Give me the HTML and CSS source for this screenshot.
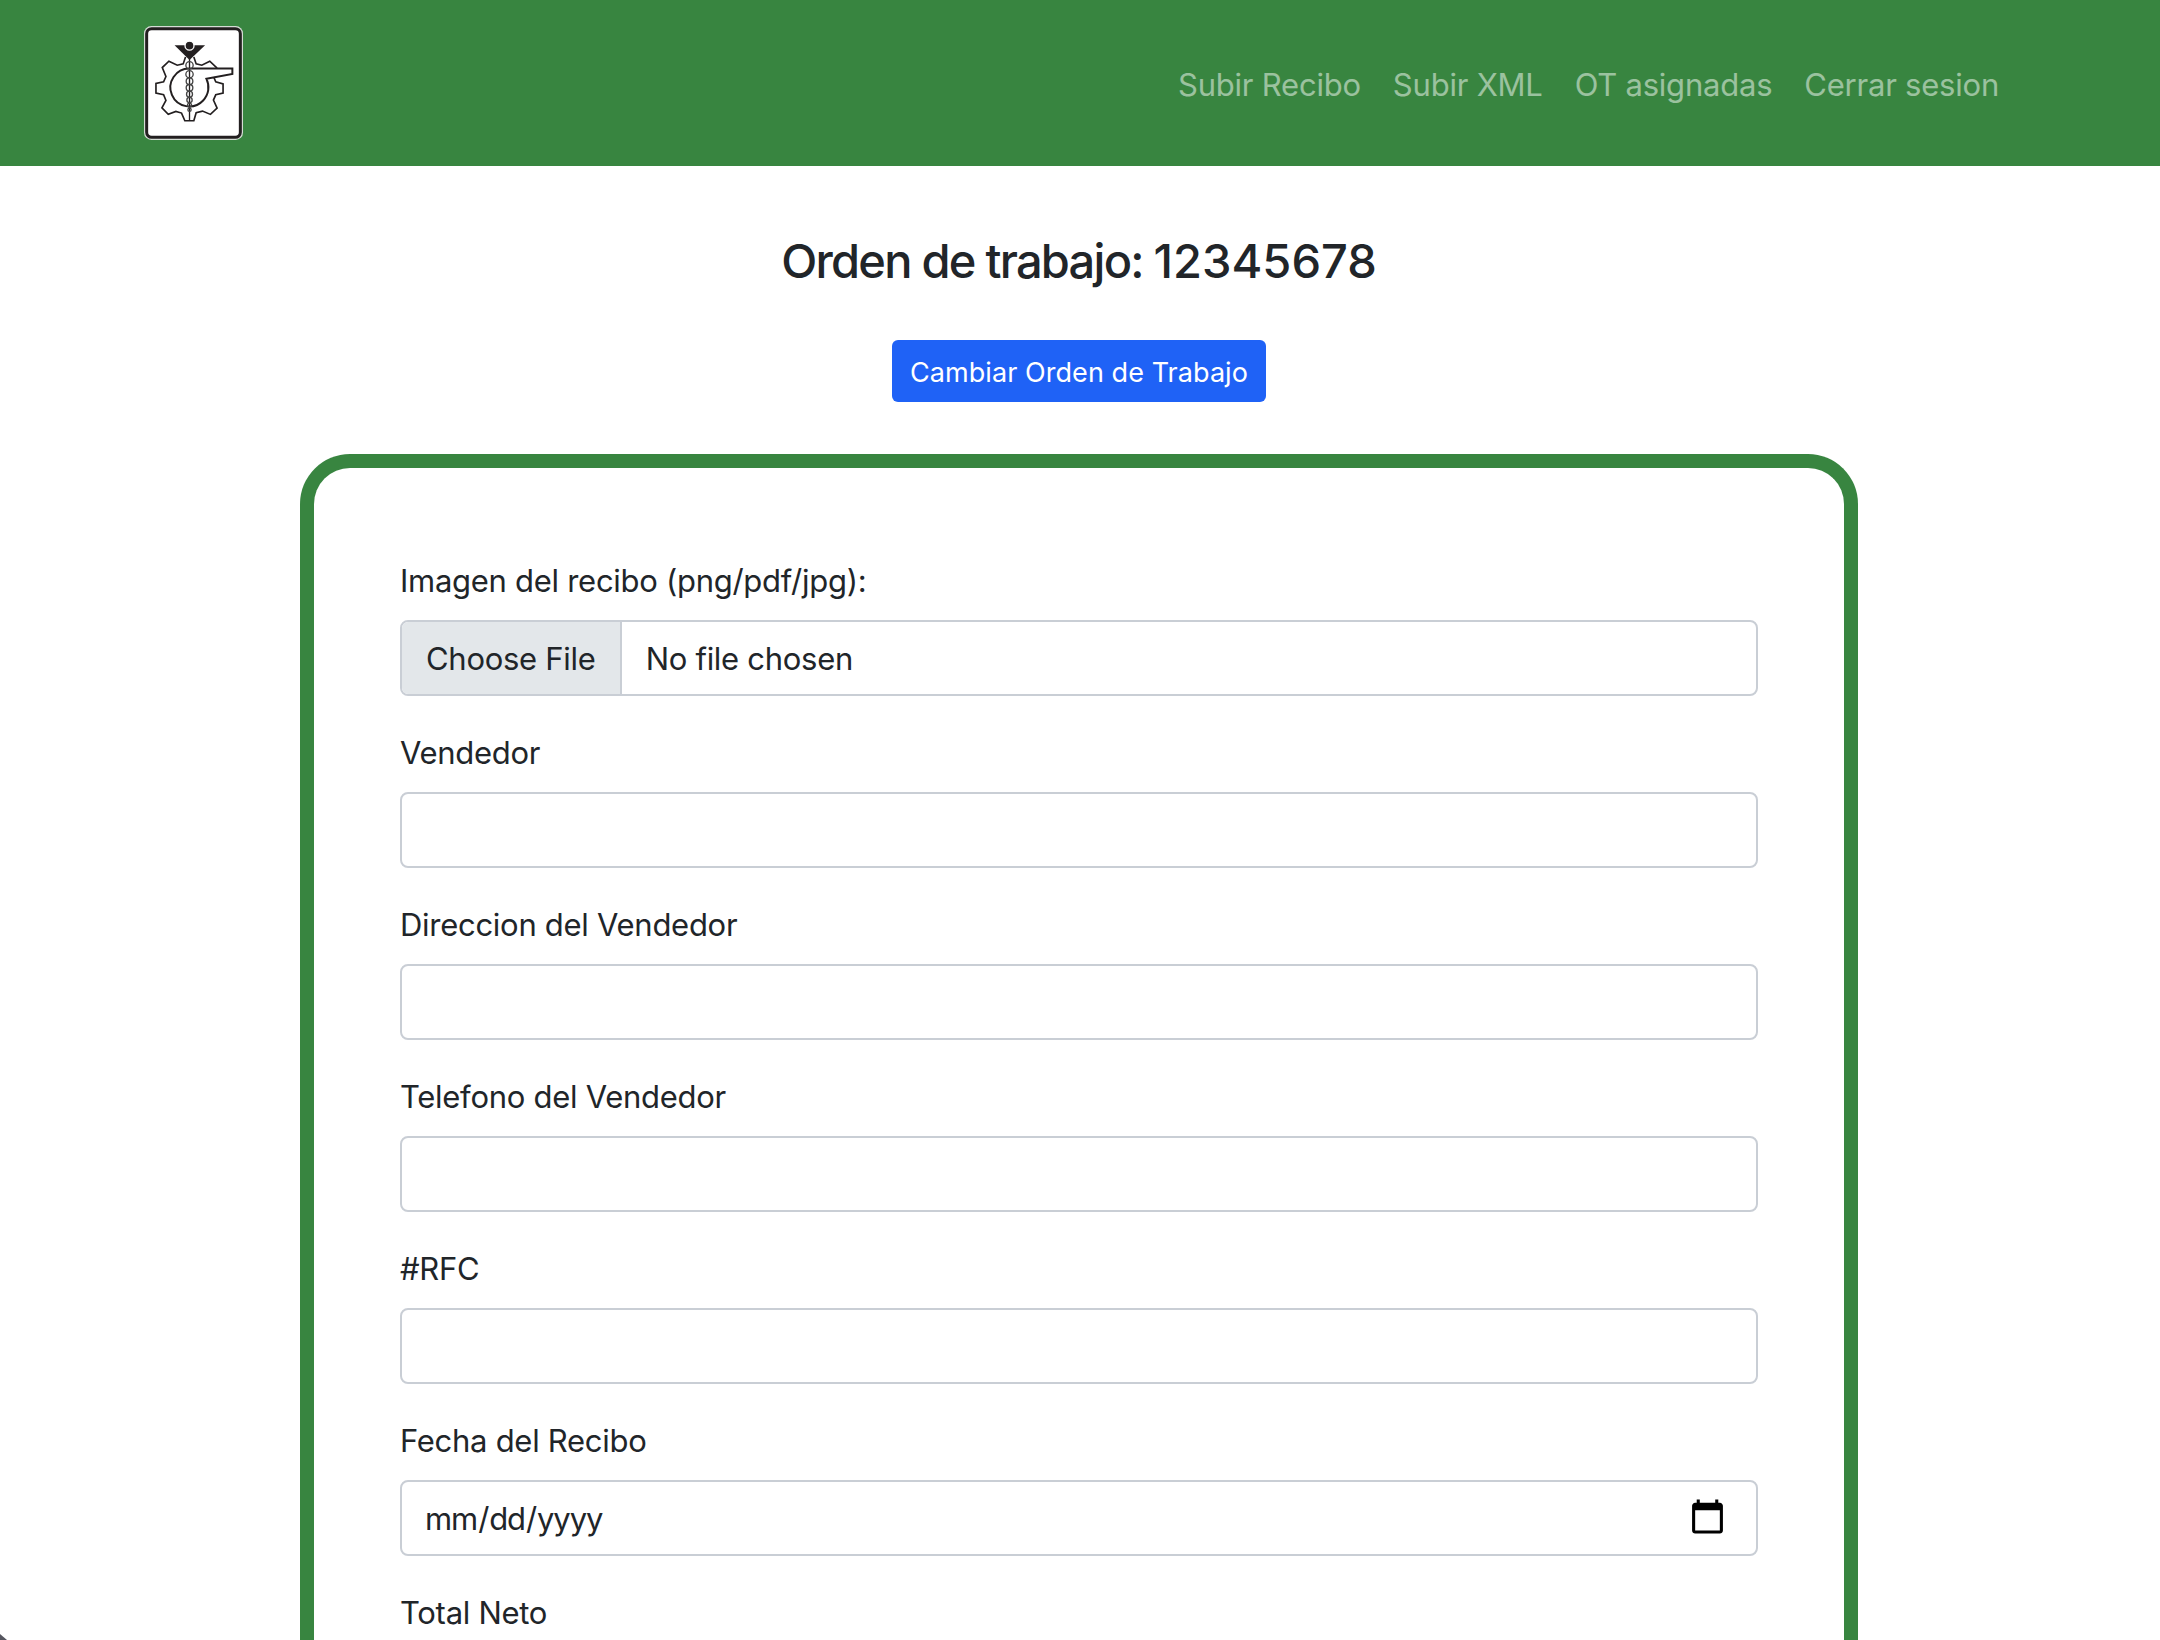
FILE: index.html
```html
<!DOCTYPE html>
<html lang="en-US">
<head>
<meta charset="utf-8">
<title>Orden de trabajo</title>
<link rel="stylesheet" href="styles.css">
</head>
<body>
<nav class="navbar">
  <a class="brand" href="#" aria-label="Inicio">
    <svg class="logo" viewBox="43 32 298 343" fill="none" stroke="#231f20">
      <rect x="43" y="32" width="298" height="343" rx="22" fill="#d5dcd5" stroke="none"/>
      <rect x="51" y="40" width="282" height="327" rx="15" fill="#fff" stroke-width="9"/>
      <path stroke-width="5" d="M168 125l-7 21-18 4-25-12-20 19 11 27-7 16-23 5v29l23 5 7 17-12 22 19 20 23-9 17 5 10 23h27l7-24 19-5 24 10 20-19-11-24 7-16 22-5v-28l-22-6-6-14M263 159l-22-21-24 12-17-4-7-21"/>
      <path stroke-width="6" d="M180 160h129v16l-78 15A57 57 0 0 1 221 256a57 57 0 1 1-41-96"/>
      <path stroke-width="4" d="M180 130v185"/>
      <g stroke-width="4" stroke="#444">
        <circle cx="180" cy="150" r="11"/><circle cx="180" cy="177" r="11"/>
        <circle cx="180" cy="198" r="10"/><circle cx="180" cy="218" r="10"/>
        <circle cx="180" cy="237" r="9"/><circle cx="180" cy="255" r="8"/>
        <circle cx="180" cy="270" r="6"/><circle cx="180" cy="284" r="5"/>
      </g>
      <path fill="#231f20" stroke="none" d="M135 90h92l-47 44z"/>
      <circle cx="180" cy="91" r="13.5" fill="#231f20" stroke="#fff" stroke-width="4"/>
    </svg>
  </a>
  <div class="nav-links">
    <a class="nav-link" href="#">Subir Recibo</a>
    <a class="nav-link" href="#">Subir XML</a>
    <a class="nav-link" href="#">OT asignadas</a>
    <a class="nav-link" href="#">Cerrar sesion</a>
  </div>
</nav>
<main class="content">
  <h4 class="title">Orden de trabajo: <span class="order-number">12345678</span></h4>
  <button class="btn" type="button">Cambiar Orden de Trabajo</button>
  <form class="card">
    <div class="field"><label class="label" for="f1">Imagen del recibo (png/pdf/jpg):</label><input class="control control-file" id="f1" type="file"></div>
    <div class="field"><label class="label" for="f2">Vendedor</label><input class="control" id="f2" type="text"></div>
    <div class="field"><label class="label" for="f3">Direccion del Vendedor</label><input class="control" id="f3" type="text"></div>
    <div class="field"><label class="label" for="f4">Telefono del Vendedor</label><input class="control" id="f4" type="text"></div>
    <div class="field"><label class="label" for="f5">#RFC</label><input class="control" id="f5" type="text"></div>
    <div class="field"><label class="label" for="f6">Fecha del Recibo</label><input class="control control-date" id="f6" type="date"></div>
    <div class="field"><label class="label" for="f7">Total Neto</label></div>
  </form>
</main>
<div class="window-corner"></div>
</body>
</html>
```

FILE: styles.css
```css
* { box-sizing: border-box; }
html { overflow: hidden; }
body {
  margin: 0;
  height: 1640px;
  overflow: hidden;
  position: relative;
  background: #fff;
  color: #212529;
  font: 430 31px/48px Inter, "Liberation Sans", sans-serif;
  letter-spacing: -.28px;
}
.navbar {
  height: 166px;
  padding: 0 145px 0 144px;
  display: flex;
  align-items: center;
  justify-content: space-between;
  background: #388540;
}
.brand { display: block; height: 114px; }
.logo { display: block; width: 99px; height: 114px; }
.nav-links { display: flex; padding-top: 4px; letter-spacing: -.22px; }
.nav-link {
  padding: 0 16px;
  color: rgba(255, 255, 255, .5);
  text-decoration: none;
  white-space: nowrap;
}
.content {
  height: 1474px;
  overflow: hidden;
  display: flex;
  flex-direction: column;
  align-items: center;
  padding: 66px 302px 0 300px;
}
.content > * { flex-shrink: 0; }
.title {
  margin: 0 0 50px;
  font-size: 47px;
  line-height: 58px;
  font-weight: 540;
  letter-spacing: -1.75px;
}
.order-number { letter-spacing: 0; }
.btn {
  width: 374px;
  height: 62px;
  padding: 3px 0 0;
  border: 0;
  border-radius: 6px;
  background: #1f62f6;
  color: #fff;
  font: 430 27px/42px Inter, "Liberation Sans", sans-serif;
  letter-spacing: .06px;
  white-space: nowrap;
}
.card {
  width: 1558px;
  height: 1240px;
  margin-top: 52px;
  padding: 88px 86px 0;
  border: 14px solid #388540;
  border-bottom: 0;
  border-radius: 50px 50px 0 0;
}
.field { display: flex; flex-direction: column; gap: 16px; margin-bottom: 32px; }
.label { height: 48px; padding-top: 1px; }
.control {
  display: block;
  width: 100%;
  height: 76px;
  padding: 12px 24px;
  border: 2px solid #c9ced5;
  border-radius: 8px;
  background: #fff;
  color: #212529;
  font: inherit;
  letter-spacing: inherit;
  outline: 0;
}
.control-file { overflow: hidden; }
.control-file::file-selector-button {
  height: 72px;
  margin: -12px 24px -12px -24px;
  padding: 13px 24px 11px;
  border: 0 solid #c9ced5;
  border-right-width: 2px;
  border-radius: 0;
  background: #e3e7ea;
  color: #212529;
  font: inherit;
  letter-spacing: inherit;
}
.control-date { padding: 13px 24px 11px 22px; letter-spacing: -1.1px; }
.control-date::-webkit-calendar-picker-indicator {
  width: 39px;
  height: 39px;
  padding: 0;
  margin: 0 5px 3px 0;
}
/* Rounded lower-left corner of the window */
.window-corner {
  position: absolute;
  left: 0;
  bottom: 0;
  width: 7px;
  height: 6px;
  background: #55565f;
  clip-path: polygon(0 0, 100% 100%, 0 100%);
}
```
